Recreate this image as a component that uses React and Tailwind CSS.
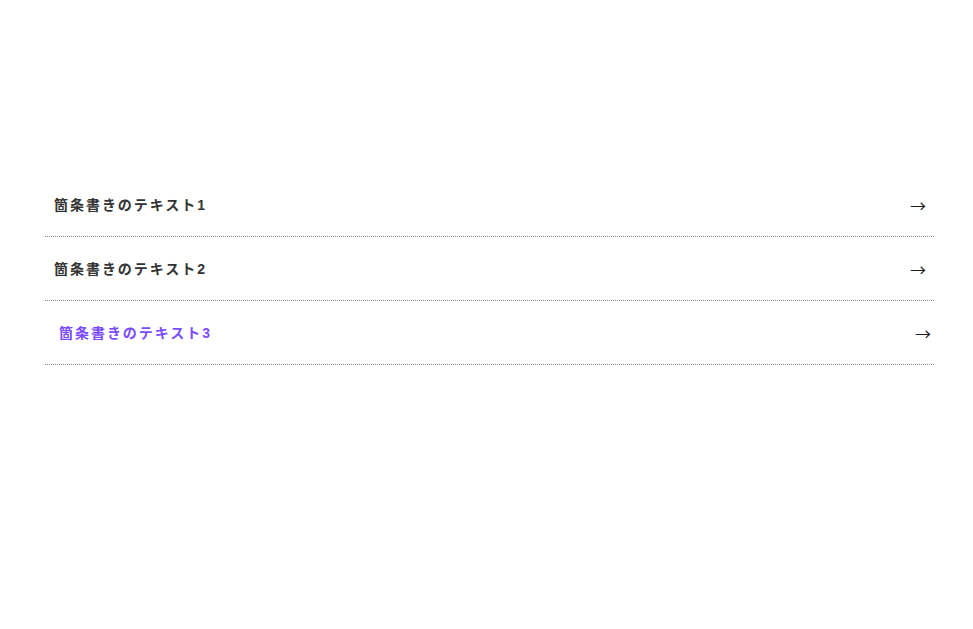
import React from 'react';

const items = [
    { label: '箇条書きのテキスト1', active: false },
    { label: '箇条書きのテキスト2', active: false },
    { label: '箇条書きのテキスト3', active: true },
];

const App = () => {
    return (
        <div className="min-h-screen bg-white pt-[173px] pl-[45px] pr-[39px]" style={{ fontFamily: '"Liberation Sans", "Noto Sans CJK JP", sans-serif' }}>
            <ul>
                {items.map((item, i) => (
                    <li key={i} className="border-b border-dotted border-[#8a8a8a]">
                        <a
                            href="#"
                            className={`flex h-[63px] items-center justify-between pr-[8px] ${item.active ? 'pl-[14px] text-[#7b4cff]' : 'pl-[9px] text-[#333333]'}`}
                        >
                            <span className="pt-[1px] text-[14px] leading-[20px] font-bold tracking-[0.14em]">{item.label}</span>
                            <span
                                className={`text-[16px] leading-none text-[#222222] ${item.active ? 'translate-x-[5px]' : ''}`}
                                style={{ fontFamily: '"Noto Sans CJK JP", sans-serif' }}
                            >
                                →
                            </span>
                        </a>
                    </li>
                ))}
            </ul>
        </div>
    );
};

export default App;
